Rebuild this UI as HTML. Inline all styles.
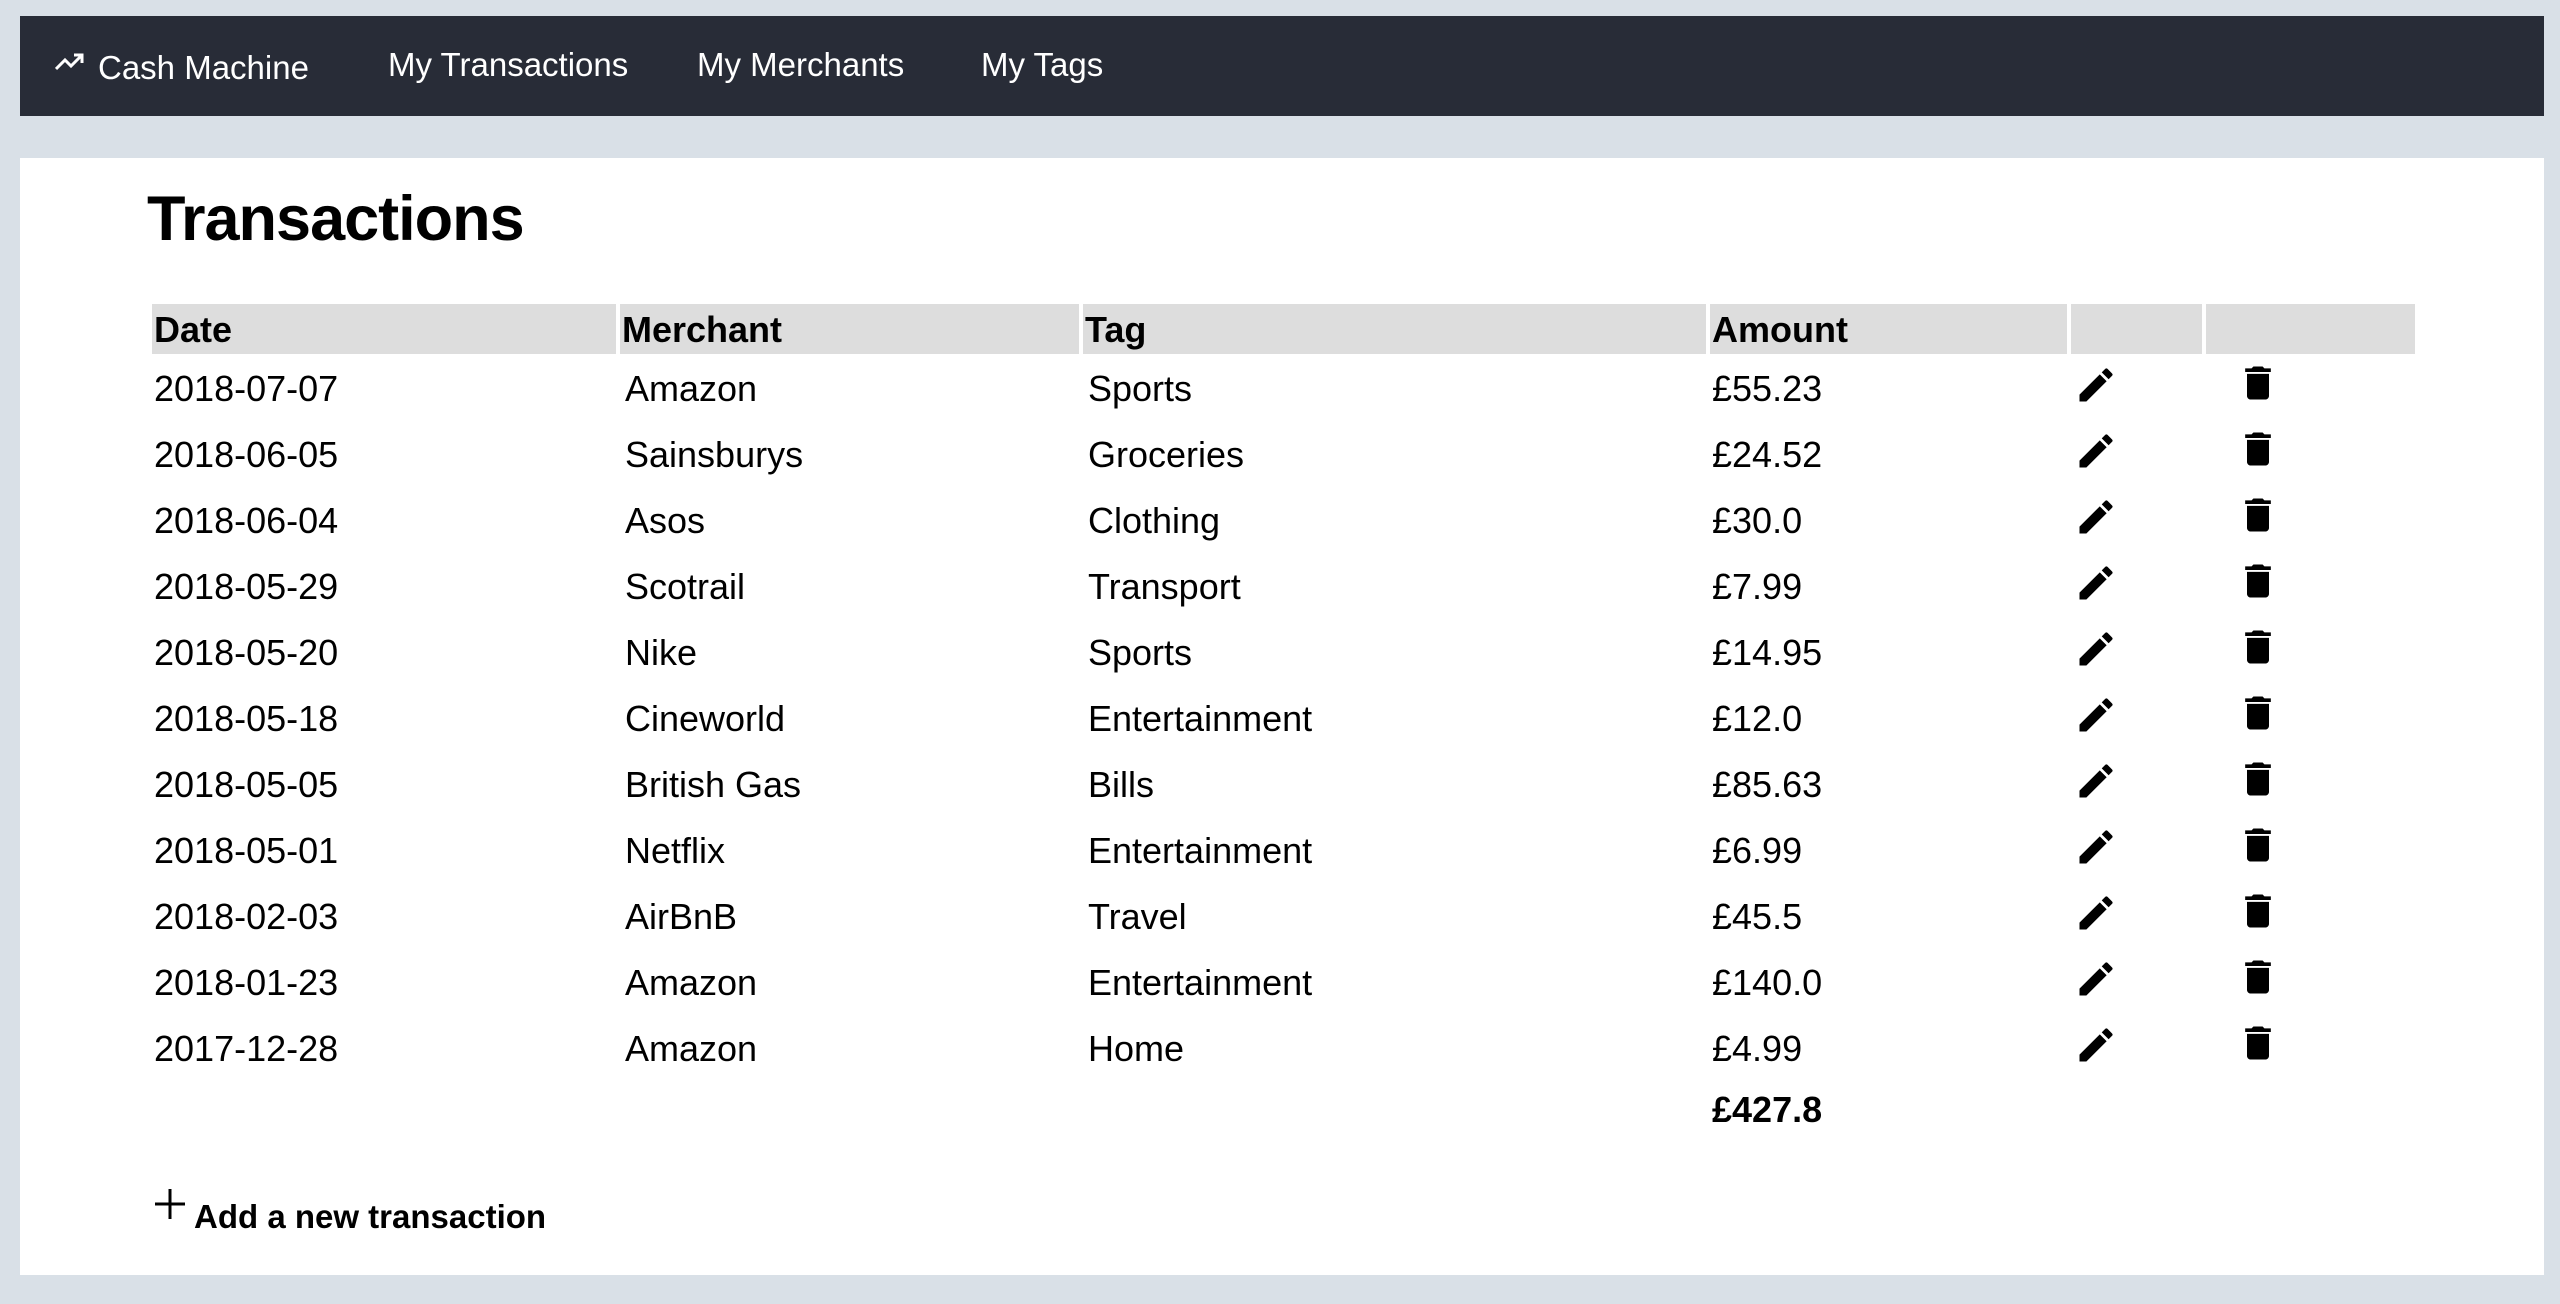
<!DOCTYPE html>
<html><head><meta charset="utf-8"><style>
html,body{margin:0;padding:0;}
body{width:2560px;height:1304px;background:#d9e0e7;position:relative;overflow:hidden;font-family:"Liberation Sans",sans-serif;color:#000;}
.nav{position:absolute;left:20px;top:16px;width:2524px;height:100px;background:#282c37;}
.nav span{position:absolute;color:#fff;font-size:33px;top:30px;white-space:nowrap;}
.panel{position:absolute;left:20px;top:158px;width:2524px;height:1117px;background:#fff;}
h1{position:absolute;left:147px;top:183px;margin:0;font-size:63px;font-weight:bold;letter-spacing:-1px;}
.th{position:absolute;top:304px;height:50px;background:#dddddd;font-weight:bold;font-size:36px;line-height:52px;padding-left:2px;box-sizing:border-box;}
.c{position:absolute;font-size:36px;white-space:nowrap;line-height:40px;}
.ic{position:absolute;}
</style></head><body>
<div class="nav">
<svg style="position:absolute;left:35px;top:37px" width="30" height="18" viewBox="0 0 30 18"><path d="M1 16 L10 7 L16 13 L27 2 M19 2 H27 V10" fill="none" stroke="#fff" stroke-width="3"/></svg>
<span style="left:78px;top:33px">Cash Machine</span>
<span style="left:368px;top:30px">My Transactions</span>
<span style="left:677px;top:30px">My Merchants</span>
<span style="left:961px;top:30px">My Tags</span>
</div>
<div class="panel"></div>
<h1>Transactions</h1>
<div class="th" style="left:152px;width:464px">Date</div>
<div class="th" style="left:620px;width:459px">Merchant</div>
<div class="th" style="left:1083px;width:623px">Tag</div>
<div class="th" style="left:1710px;width:357px">Amount</div>
<div class="th" style="left:2071px;width:131px"></div>
<div class="th" style="left:2206px;width:209px"></div>
<div id="rows"></div>
<div class="c" style="left:1712px;top:1090px;font-weight:bold">£427.8</div>
<svg class="ic" style="left:155px;top:1189px" width="30" height="30" viewBox="0 0 30 30"><path d="M15 0V30M0 15H30" stroke="#000" stroke-width="3"/></svg>
<div class="c" style="left:194px;top:1197px;font-weight:bold;font-size:33px">Add a new transaction</div>
<script>
var d=[["2018-07-07","Amazon","Sports","£55.23"],["2018-06-05","Sainsburys","Groceries","£24.52"],["2018-06-04","Asos","Clothing","£30.0"],["2018-05-29","Scotrail","Transport","£7.99"],["2018-05-20","Nike","Sports","£14.95"],["2018-05-18","Cineworld","Entertainment","£12.0"],["2018-05-05","British Gas","Bills","£85.63"],["2018-05-01","Netflix","Entertainment","£6.99"],["2018-02-03","AirBnB","Travel","£45.5"],["2018-01-23","Amazon","Entertainment","£140.0"],["2017-12-28","Amazon","Home","£4.99"]];
var h="",xs=[154,625,1088,1712];
for(var i=0;i<d.length;i++){var cy=389+i*66;
for(var j=0;j<4;j++)h+='<div class="c" style="left:'+xs[j]+'px;top:'+(cy-20)+'px">'+d[i][j]+'</div>';
h+='<svg class="ic" style="left:2074px;top:'+(cy-26)+'px" width="44" height="44" viewBox="0 0 24 24"><path d="M3 17.25V21h3.75L17.81 9.94l-3.75-3.75L3 17.25zM20.71 7.04a1 1 0 000-1.41l-2.34-2.34a1 1 0 00-1.41 0l-1.83 1.83 3.75 3.75 1.83-1.83z"/></svg>';
h+='<svg class="ic" style="left:2236px;top:'+(cy-28)+'px" width="44" height="44" viewBox="0 0 24 24"><path d="M6 19c0 1.1.9 2 2 2h8c1.1 0 2-.9 2-2V7H6v12zM19 4h-3.5l-1-1h-5l-1 1H5v2h14V4z"/></svg>';}
document.getElementById("rows").innerHTML=h;
</script>
</body></html>
